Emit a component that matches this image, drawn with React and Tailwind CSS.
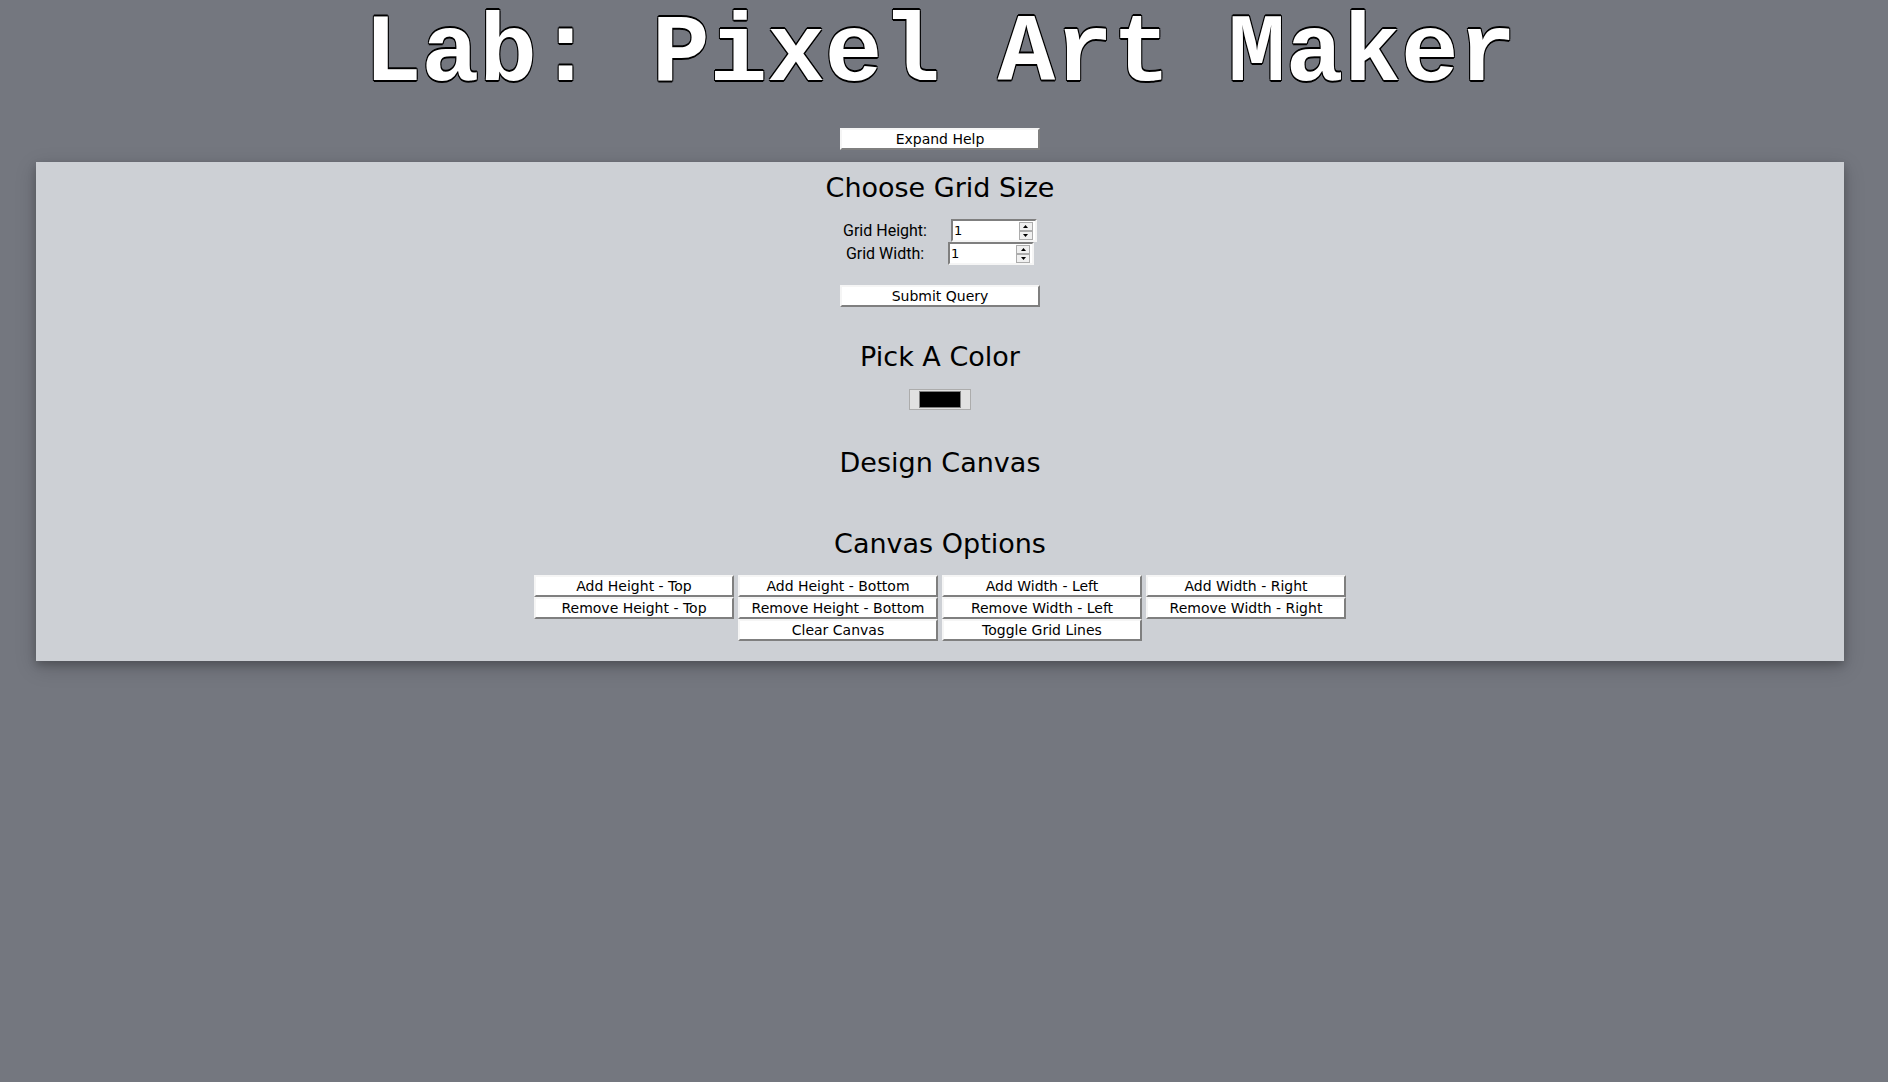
import React, { useState } from "react";

const bevel =
  "h-[22px] w-[200px] border-2 border-t-[#f5f5f5] border-l-[#f5f5f5] border-r-[#7f7f7f] border-b-[#7f7f7f] bg-white font-['DejaVu_Sans',sans-serif] text-[14px] leading-[18px] text-black whitespace-nowrap";

function BevelButton({ children, ...rest }) {
  return (
    <button type="button" className={bevel} {...rest}>
      {children}
    </button>
  );
}

function Heading({ children }) {
  return (
    <h2 className="text-center font-['DejaVu_Sans',sans-serif] text-[27px] leading-8 text-black">
      {children}
    </h2>
  );
}

function Arrow({ down }) {
  return (
    <svg viewBox="0 0 5 3" className="h-[3px] w-[5px]" aria-hidden="true">
      <path d={down ? "M0 0h5L2.5 3z" : "M0 3h5L2.5 0z"} fill="#000" />
    </svg>
  );
}

const step =
  "flex h-[9px] w-[14px] items-center justify-center border border-[#acacac] bg-[#f0f0f0]";

function NumberField({ id, label }) {
  const [value, setValue] = useState(1);
  return (
    <div className="flex items-center justify-center gap-6">
      <label htmlFor={id} className="text-base leading-[22px]">
        {label}
      </label>
      <div className="flex h-[23px] w-[86px] items-center border-2 border-t-[#7f7f7f] border-l-[#7f7f7f] border-r-[#f5f5f5] border-b-[#f5f5f5] bg-white pr-0.5">
        <input
          id={id}
          type="number"
          min="1"
          value={value}
          onChange={(e) => setValue(Number(e.target.value))}
          className="h-4 w-0 min-w-0 flex-1 appearance-none bg-white pl-px font-['DejaVu_Sans',sans-serif] text-[13px] leading-4 outline-none [-moz-appearance:textfield] [&::-webkit-inner-spin-button]:appearance-none"
        />
        <div className="flex flex-col">
          <button type="button" aria-label={label + " up"} className={step} onClick={() => setValue(value + 1)}>
            <Arrow />
          </button>
          <button type="button" aria-label={label + " down"} className={step} onClick={() => setValue(Math.max(1, value - 1))}>
            <Arrow down />
          </button>
        </div>
      </div>
    </div>
  );
}

const optionRows = [
  ["Add Height - Top", "Add Height - Bottom", "Add Width - Left", "Add Width - Right"],
  ["Remove Height - Top", "Remove Height - Bottom", "Remove Width - Left", "Remove Width - Right"],
  ["Clear Canvas", "Toggle Grid Lines"],
];

export default function App() {
  return (
    <div className="min-h-screen bg-[#74777f] pr-2 font-['Roboto',sans-serif] text-black">
      <h1 className="h-32 text-center font-['Liberation_Mono',monospace] text-[96px] leading-[109px] font-bold whitespace-nowrap text-white [text-shadow:-1px_-1px_0_#000,1px_-1px_0_#000,-1px_1px_0_#000,1px_1px_0_#000,0_2px_0_#000,0_-2px_0_#000]">
        Lab: Pixel Art Maker
      </h1>
      <div className="flex justify-center">
        <BevelButton>Expand Help</BevelButton>
      </div>
      <main className="mx-9 mt-3 bg-[#cdd0d5] pt-[10px] pb-5 shadow-[0_4px_8px_0_rgba(0,0,0,0.2),0_6px_20px_0_rgba(0,0,0,0.19)]">
        <Heading>Choose Grid Size</Heading>
        <form className="mt-[15px]" onSubmit={(e) => e.preventDefault()}>
          <NumberField id="grid-height" label="Grid Height:" />
          <NumberField id="grid-width" label="Grid Width:" />
          <div className="mt-5 flex justify-center">
            <button type="submit" className={bevel}>
              Submit Query
            </button>
          </div>
        </form>
        <section className="mt-[34px]">
          <Heading>Pick A Color</Heading>
          <div className="mt-4 flex justify-center">
            <input
              type="color"
              defaultValue="#000000"
              aria-label="Pick A Color"
              className="h-[21px] w-[62px] appearance-none border border-[#acacac] bg-[#e1e1e1] [&::-webkit-color-swatch-wrapper]:px-[9px] [&::-webkit-color-swatch-wrapper]:py-px [&::-webkit-color-swatch]:border [&::-webkit-color-swatch]:border-[#7f7f7f]"
            />
          </div>
        </section>
        <section className="mt-[37px]">
          <Heading>Design Canvas</Heading>
        </section>
        <section className="mt-[49px]">
          <Heading>Canvas Options</Heading>
          <div className="mt-[15px]">
            {optionRows.map((row) => (
              <div key={row[0]} className="flex flex-wrap justify-center gap-x-1">
                {row.map((label) => (
                  <BevelButton key={label}>{label}</BevelButton>
                ))}
              </div>
            ))}
          </div>
        </section>
      </main>
    </div>
  );
}
